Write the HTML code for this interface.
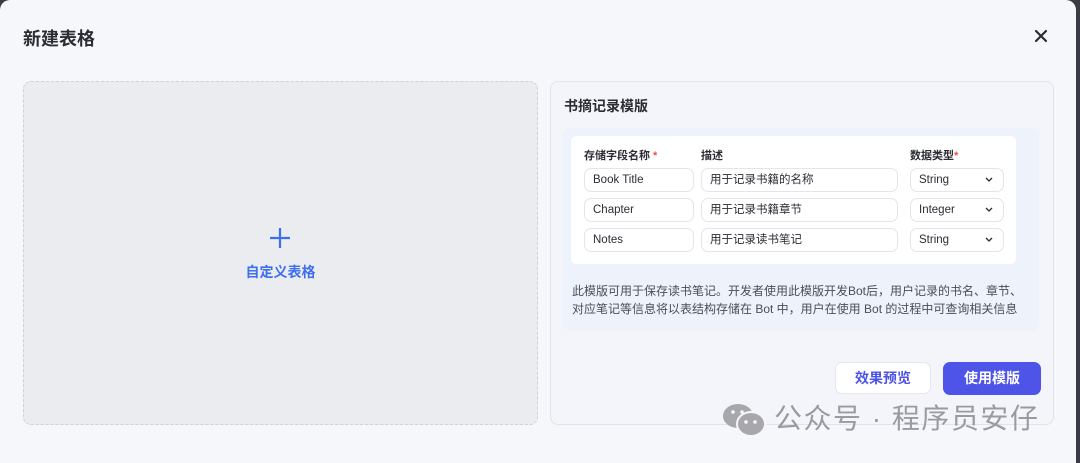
<!DOCTYPE html>
<html><head><meta charset="utf-8"><style>
*{box-sizing:border-box;margin:0;padding:0}
body{width:1080px;height:463px;background:#3a3b44;font-family:"Liberation Sans","Noto Sans CJK SC",sans-serif;position:relative;overflow:hidden}
.modal{position:absolute;left:0;top:0;width:1076px;height:463px;background:#f6f7fb;border-radius:10px 10px 0 0}
.t{position:absolute;left:23px;top:25px;font-size:18px;font-weight:bold;color:#2b2d33}
.x{position:absolute;left:1033px;top:28px}
.left{position:absolute;left:23px;top:81px;width:515px;height:344px;background:#ebecf0;border:1px dashed #cfd1d8;border-radius:8px}
.lt{position:absolute;left:0;width:100%;text-align:center;color:#3d6ef0;font-size:14px;font-weight:bold}
.right{position:absolute;left:550px;top:81px;width:504px;height:344px;background:#f4f5fa;border:1px solid #e1e3e8;border-radius:8px}
.rt{position:absolute;left:13px;top:14px;font-size:14px;font-weight:bold;color:#2b2d33}
.blue{position:absolute;left:12px;top:46px;width:476px;height:203px;background:#eef2fb;border-radius:8px}
.tbl{position:absolute;left:8px;top:8px;width:445px;height:128px;background:#fff;border-radius:6px}
.h{position:absolute;top:11px;font-size:11px;font-weight:bold;color:#2b2d33}
.h i{color:#f0503c;font-style:normal}
.in{position:absolute;height:24px;border:1px solid #e3e5ea;border-radius:7px;font-size:11.5px;color:#2b2d33;line-height:22px;padding-left:8px;background:#fff}
.ch{position:absolute;right:10px;top:8px}
.desc{position:absolute;left:9px;font-size:12px;line-height:18px;color:#4b4e58;width:470px}
.b1{position:absolute;left:284px;top:280px;width:96px;height:32px;background:#fff;border:1px solid #e6e7ec;border-radius:7px;color:#4c52e6;font-size:14px;font-weight:bold;text-align:center;line-height:30px}
.b2{position:absolute;left:392px;top:280px;width:98px;height:33px;background:#4f54e8;border-radius:7px;color:#fff;font-size:14px;font-weight:bold;text-align:center;line-height:33px}
.wm{position:absolute;left:774px;top:397px;font-size:28px;color:#9a9aa0;letter-spacing:1.5px}
</style></head><body>
<div class="modal">
<div class="t">新建表格</div>
<svg class="x" width="16" height="16" viewBox="0 0 16 16"><path d="M3 3L13 13M13 3L3 13" stroke="#2b2d33" stroke-width="2.2" stroke-linecap="round"/></svg>
<div class="left">
<svg width="22" height="22" viewBox="0 0 22 22" style="position:absolute;left:245px;top:145px"><path d="M11 1V21M1 11H21" stroke="#3d6ef0" stroke-width="2.2"/></svg>
<div class="lt" style="top:180px">自定义表格</div>
</div>
<div class="right">
<div class="rt">书摘记录模版</div>
<div class="blue">
<div class="tbl">
<div class="h" style="left:13px">存储字段名称<i> *</i></div>
<div class="h" style="left:130px">描述</div>
<div class="h" style="left:339px">数据类型<i>*</i></div>
<div class="in" style="left:13px;top:32px;width:110px">Book Title</div>
<div class="in" style="left:130px;top:32px;width:197px">用于记录书籍的名称</div>
<div class="in" style="left:339px;top:32px;width:94px">String<svg class="ch" width="8" height="6" viewBox="0 0 8 6"><path d="M1 1L4 4L7 1" stroke="#2b2d33" stroke-width="1.3" fill="none"/></svg></div>
<div class="in" style="left:13px;top:62px;width:110px">Chapter</div>
<div class="in" style="left:130px;top:62px;width:197px">用于记录书籍章节</div>
<div class="in" style="left:339px;top:62px;width:94px">Integer<svg class="ch" width="8" height="6" viewBox="0 0 8 6"><path d="M1 1L4 4L7 1" stroke="#2b2d33" stroke-width="1.3" fill="none"/></svg></div>
<div class="in" style="left:13px;top:92px;width:110px">Notes</div>
<div class="in" style="left:130px;top:92px;width:197px">用于记录读书笔记</div>
<div class="in" style="left:339px;top:92px;width:94px">String<svg class="ch" width="8" height="6" viewBox="0 0 8 6"><path d="M1 1L4 4L7 1" stroke="#2b2d33" stroke-width="1.3" fill="none"/></svg></div>
</div>
<div class="desc" style="top:154px">此模版可用于保存读书笔记。开发者使用此模版开发Bot后，用户记录的书名、章节、<br>对应笔记等信息将以表结构存储在 Bot 中，用户在使用 Bot 的过程中可查询相关信息</div>
</div>
<div class="b1">效果预览</div>
<div class="b2">使用模版</div>
</div>
<svg style="position:absolute;left:722px;top:402px" width="46" height="36" viewBox="0 0 46 36"><ellipse cx="16" cy="14" rx="15" ry="12" fill="#a8a8ac"/><ellipse cx="29" cy="22" rx="14" ry="12" fill="#a8a8ac" stroke="#f6f7fb" stroke-width="2"/><circle cx="24" cy="20" r="1.8" fill="#f6f7fb"/><circle cx="33" cy="20" r="1.8" fill="#f6f7fb"/><circle cx="11" cy="10" r="1.8" fill="#f6f7fb"/><circle cx="20" cy="10" r="1.8" fill="#f6f7fb"/></svg>
<div class="wm">公众号 · 程序员安仔</div>
</div>
</body></html>
